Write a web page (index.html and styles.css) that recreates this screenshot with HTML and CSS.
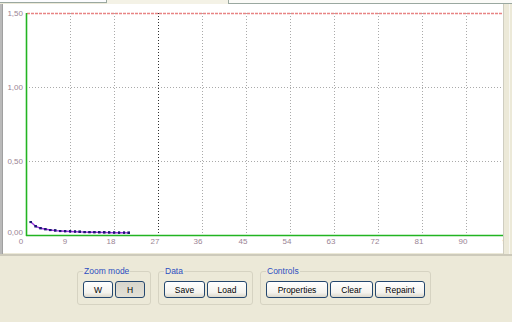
FILE: index.html
```html
<!DOCTYPE html>
<html lang="en">
<head>
    <meta charset="UTF-8">
    <title>Chart</title>
    <link rel="stylesheet" href="styles.css">
</head>
<body>
    <div class="tabs">
        <div class="tab"></div>
        <div class="tab active"></div>
        <div class="tab-rest"></div>
    </div>

    <div class="page">
        <div class="edge-left"></div>
        <svg class="chart" width="500" height="249" viewBox="3 4 500 249">
            <defs>
                <marker id="dot" markerWidth="3" markerHeight="3" refX="1.5" refY="1.5" markerUnits="userSpaceOnUse">
                    <rect width="2.6" height="2.6" fill="#1a1a70"/>
                </marker>
            </defs>

            <g class="grid">
                <line x1="70.5" y1="13" x2="70.5" y2="235"/>
                <line x1="114.5" y1="13" x2="114.5" y2="235"/>
                <line x1="202.5" y1="13" x2="202.5" y2="235"/>
                <line x1="246.5" y1="13" x2="246.5" y2="235"/>
                <line x1="290.5" y1="13" x2="290.5" y2="235"/>
                <line x1="334.5" y1="13" x2="334.5" y2="235"/>
                <line x1="378.5" y1="13" x2="378.5" y2="235"/>
                <line x1="422.5" y1="13" x2="422.5" y2="235"/>
                <line x1="466.5" y1="13" x2="466.5" y2="235"/>
                <line x1="26" y1="87.5" x2="503" y2="87.5"/>
                <line x1="26" y1="161.5" x2="503" y2="161.5"/>
            </g>
            <line class="marker-line" x1="158.5" y1="13" x2="158.5" y2="235"/>
            <line class="limit" x1="27" y1="13.5" x2="503" y2="13.5"/>

            <line class="axis" x1="26.5" y1="13" x2="26.5" y2="236"/>
            <line class="axis" x1="26" y1="235.5" x2="503" y2="235.5"/>

            <g class="ylabels">
                <text x="23" y="16">1,50</text>
                <text x="23" y="90">1,00</text>
                <text x="23" y="164">0,50</text>
                <text x="23" y="235">0,00</text>
            </g>
            <g class="xlabels">
                <text x="21" y="244">0</text>
                <text x="65" y="244">9</text>
                <text x="111" y="244">18</text>
                <text x="155" y="244">27</text>
                <text x="198" y="244">36</text>
                <text x="243" y="244">45</text>
                <text x="287" y="244">54</text>
                <text x="331" y="244">63</text>
                <text x="375" y="244">72</text>
                <text x="419" y="244">81</text>
                <text x="463" y="244">90</text>
                <text x="507" y="244">99</text>
            </g>

            <polyline class="series" points="30.9,222 35.8,226.4 40.7,228.3 45.6,229.3 50.5,230 55.4,230.6 60.3,231 65.2,231.3 70.1,231.5 75,231.7 79.9,231.9 84.8,232.1 89.7,232.2 94.6,232.3 99.5,232.4 104.4,232.5 109.3,232.6 114.2,232.7 119.1,232.8 124,232.8 128.9,232.9"/>
        </svg>
        <div class="edge-right"></div>
    </div>

    <div class="panel">
        <fieldset class="group">
            <legend>Zoom mode</legend>
            <button class="btn w30">W</button>
            <button class="btn w30 pressed">H</button>
        </fieldset>
        <fieldset class="group">
            <legend>Data</legend>
            <button class="btn w41">Save</button>
            <button class="btn w40">Load</button>
        </fieldset>
        <fieldset class="group">
            <legend>Controls</legend>
            <button class="btn w62">Properties</button>
            <button class="btn w43">Clear</button>
            <button class="btn w50">Repaint</button>
        </fieldset>
    </div>
</body>
</html>
```

FILE: styles.css
```css
body {
    margin: 0;
    width: 512px;
    height: 322px;
    overflow: hidden;
    background-color: #ece9d8;
    font-family: "Liberation Sans", Arial, sans-serif;
}

/* tab headers, cut off at the top */
.tabs {
    display: flex;
    height: 4px;
}

.tab {
    width: 107px;
    background-color: #fcfcfe;
    border-bottom: 1px solid #9aa8a0;
    border-right: 1px solid #9aa8a0;
    box-sizing: border-box;
    height: 3px;
}

.tab.active {
    width: 122px;
    height: 4px;
    background-color: #f4f2e6;
    border-bottom: none;
}

.tab-rest {
    flex: 1;
    height: 4px;
    background-color: #fbfbf8;
    border-bottom: 1px solid #9aa8a0;
    box-sizing: border-box;
}

.page {
    display: flex;
    height: 250px;
}

.edge-left {
    width: 3px;
    background-color: #b9b9b9;
    border-right: 1px solid #a0a0a0;
    box-sizing: border-box;
}

.chart {
    display: block;
    background-color: #ffffff;
}

.edge-right {
    flex: 1;
    border-left: 1px solid #cfcdc0;
    box-shadow: inset -2px 0 0 #ece9d8, inset -3px 0 0 #f7f6ef;
}

.grid line {
    stroke: #aaaaaa;
    stroke-width: 1;
    stroke-dasharray: 1 2;
}

.marker-line {
    stroke: #303030;
    stroke-width: 1;
    stroke-dasharray: 1 2;
}

.limit {
    stroke: #e88484;
    stroke-width: 1.3;
    stroke-dasharray: 3 1;
}

.axis {
    stroke: #22b422;
    stroke-width: 1.6;
}

.ylabels text,
.xlabels text {
    font-family: "Liberation Sans", Arial, sans-serif;
    font-size: 8px;
    fill: #9a8494;
}

.ylabels text {
    text-anchor: end;
}

.xlabels text {
    text-anchor: middle;
}

.series {
    fill: none;
    stroke: #9a2ee0;
    stroke-width: 1.4;
    marker-start: url(#dot);
    marker-mid: url(#dot);
    marker-end: url(#dot);
}

/* bottom control panel */
.panel {
    display: flex;
    gap: 6px;
    height: 66px;
    box-sizing: border-box;
    padding: 10px 0 0 77px;
    border-top: 2px solid #cdcabb;
}

.group {
    display: flex;
    gap: 2px;
    margin: 0;
    height: 39px;
    box-sizing: border-box;
    padding: 5px 5px 5px 5px;
    border: 1px solid #d6d3c2;
    border-radius: 3px;
}

.group + .group {
    margin-left: 1px;
}

.group legend {
    padding: 0 1px;
    margin-left: 0;
    font-size: 8.5px;
    line-height: 10px;
    color: #2c4fc0;
}

.btn {
    height: 17px;
    padding: 0;
    font-family: "Liberation Sans", Arial, sans-serif;
    font-size: 8.5px;
    color: #000000;
    border: 1px solid #24476e;
    border-radius: 3px;
    background: linear-gradient(#ffffff, #f4f3ee 70%, #dcd8cc);
}

.btn.pressed {
    background: linear-gradient(#d8d6cc, #e2e0d6);
}

.w30 { width: 30px; }
.w40 { width: 40px; }
.w41 { width: 41px; }
.w43 { width: 43px; }
.w50 { width: 50px; }
.w62 { width: 62px; }
```
